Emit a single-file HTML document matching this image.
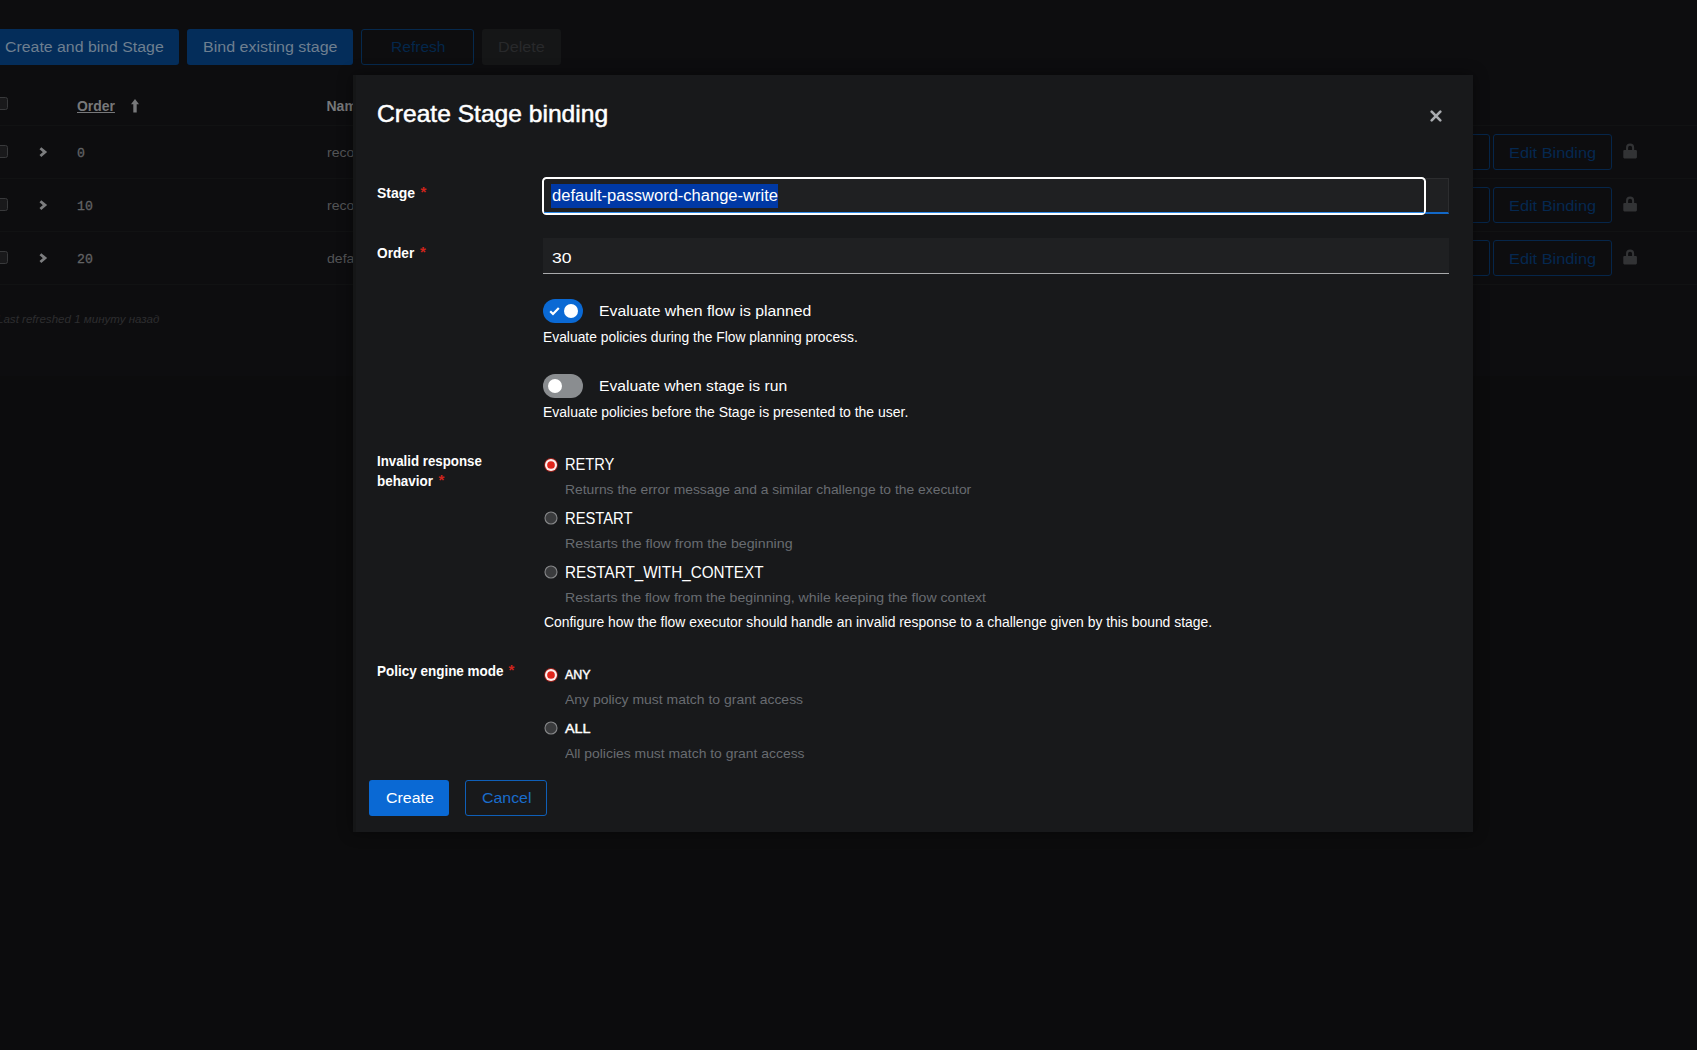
<!DOCTYPE html>
<html>
<head>
<meta charset="utf-8">
<title>Create Stage binding</title>
<style>
html,body{margin:0;padding:0;}
body{width:1697px;height:1050px;overflow:hidden;background:#0c0c0d;font-family:"Liberation Sans",sans-serif;position:relative;color:#fff;}
.a{position:absolute;box-sizing:border-box;}
.t{position:absolute;white-space:nowrap;line-height:1;transform-origin:0 0;}
.rowline{position:absolute;left:0;width:1697px;height:1px;background:#111213;}
.chk{position:absolute;left:-5px;width:13px;height:13px;border:1px solid #38393b;border-radius:2.5px;background:#19191b;box-sizing:border-box;}
.edit{position:absolute;left:1493px;width:119px;height:36px;border:1px solid #06264a;border-radius:3px;box-sizing:border-box;}
.edit2{position:absolute;left:1440px;width:50px;height:36px;border:1px solid #06264a;border-radius:3px;box-sizing:border-box;}
.req{position:absolute;color:#cf241c;font-size:15px;line-height:1;font-weight:bold;margin-top:-0.4px;}
</style>
</head>
<body>
<!-- page card (slightly lighter than page bg) -->
<div class="a" style="left:0;top:0;width:1697px;height:376px;background:#0d0d0f;"></div>
<!-- toolbar buttons -->
<div class="a" style="left:-20px;top:29px;width:199px;height:36px;border-radius:3px;background:#042d5a;"></div>
<div class="a" style="left:187px;top:29px;width:165.5px;height:36px;border-radius:3px;background:#042d5a;"></div>
<div class="a" style="left:361px;top:29px;width:113px;height:36px;border-radius:3px;border:1px solid #06294d;"></div>
<div class="a" style="left:482px;top:29px;width:79px;height:36px;border-radius:3px;background:#151617;"></div>

<!-- table -->
<div class="chk" style="top:97px;"></div>
<svg class="a" style="left:130.5px;top:99px;" width="8" height="13.5" viewBox="0 0 8 13.5"><path d="M4 0 L8 5.2 H5.7 V13.5 H2.3 V5.2 H0 Z" fill="#77787a"/></svg>
<div class="rowline" style="top:125px;"></div>
<div class="rowline" style="top:178px;"></div>
<div class="rowline" style="top:231px;"></div>
<div class="rowline" style="top:284px;"></div>
<div class="chk" style="top:145px;"></div>
<div class="chk" style="top:198px;"></div>
<div class="chk" style="top:251px;"></div>
<svg class="a" style="left:38px;top:146px;" width="10" height="12" viewBox="0 0 10 12"><path d="M2.4 2.2 L7 6.1 L2.4 10" fill="none" stroke="#7c7d7f" stroke-width="2.8"/></svg>
<svg class="a" style="left:38px;top:199px;" width="10" height="12" viewBox="0 0 10 12"><path d="M2.4 2.2 L7 6.1 L2.4 10" fill="none" stroke="#7c7d7f" stroke-width="2.8"/></svg>
<svg class="a" style="left:38px;top:252px;" width="10" height="12" viewBox="0 0 10 12"><path d="M2.4 2.2 L7 6.1 L2.4 10" fill="none" stroke="#7c7d7f" stroke-width="2.8"/></svg>

<div class="edit2" style="top:134px;"></div><div class="edit" style="top:134px;"></div>
<div class="edit2" style="top:187px;"></div><div class="edit" style="top:187px;"></div>
<div class="edit2" style="top:240px;"></div><div class="edit" style="top:240px;"></div>
<svg class="a" style="left:1623px;top:143px;" width="14.2" height="15.8" viewBox="0 0 15 16"><path d="M1.5 7 H13.5 A1.2 1.2 0 0 1 14.7 8.2 V14.8 A1.2 1.2 0 0 1 13.5 16 H1.5 A1.2 1.2 0 0 1 .3 14.8 V8.2 A1.2 1.2 0 0 1 1.5 7 Z M3.2 7 V4.6 A4.3 4.3 0 0 1 11.8 4.6 V7 H9.6 V4.6 A2.1 2.1 0 0 0 5.4 4.6 V7 Z" fill="#323335"/></svg>
<svg class="a" style="left:1623px;top:196px;" width="14.2" height="15.8" viewBox="0 0 15 16"><path d="M1.5 7 H13.5 A1.2 1.2 0 0 1 14.7 8.2 V14.8 A1.2 1.2 0 0 1 13.5 16 H1.5 A1.2 1.2 0 0 1 .3 14.8 V8.2 A1.2 1.2 0 0 1 1.5 7 Z M3.2 7 V4.6 A4.3 4.3 0 0 1 11.8 4.6 V7 H9.6 V4.6 A2.1 2.1 0 0 0 5.4 4.6 V7 Z" fill="#323335"/></svg>
<svg class="a" style="left:1623px;top:249px;" width="14.2" height="15.8" viewBox="0 0 15 16"><path d="M1.5 7 H13.5 A1.2 1.2 0 0 1 14.7 8.2 V14.8 A1.2 1.2 0 0 1 13.5 16 H1.5 A1.2 1.2 0 0 1 .3 14.8 V8.2 A1.2 1.2 0 0 1 1.5 7 Z M3.2 7 V4.6 A4.3 4.3 0 0 1 11.8 4.6 V7 H9.6 V4.6 A2.1 2.1 0 0 0 5.4 4.6 V7 Z" fill="#323335"/></svg>
<div class="t" style='left:4.60px;top:39.08px;font-size:15.5px;color:#6e7f90;transform:scaleX(1.0233);'>Create and bind Stage</div>
<div class="t" style='left:203.27px;top:39.08px;font-size:15.5px;color:#6e7f90;transform:scaleX(1.0336);'>Bind existing stage</div>
<div class="t" style='left:390.50px;top:39.08px;font-size:15.5px;color:#04274b;transform:scaleX(1.0047);'>Refresh</div>
<div class="t" style='left:498.46px;top:39.08px;font-size:15.5px;color:#28292b;transform:scaleX(1.0444);'>Delete</div>
<div class="t" style='left:76.50px;top:98.75px;font-size:14px;color:#77787a;font-weight:bold;transform:scaleX(0.9955);text-decoration:underline;text-underline-offset:1px;'>Order</div>
<div class="t" style='left:326.50px;top:98.75px;font-size:14px;color:#77787a;font-weight:bold;transform:scaleX(1.0000);'>Nam</div>
<div class="t" style='left:76.90px;top:147.28px;font-size:13px;color:#626365;font-family:"Liberation Mono", monospace;transform:scaleX(1.0143);-webkit-text-stroke:0.3px #626365;'>0</div>
<div class="t" style='left:76.90px;top:200.28px;font-size:13px;color:#626365;font-family:"Liberation Mono", monospace;transform:scaleX(1.0134);-webkit-text-stroke:0.3px #626365;'>10</div>
<div class="t" style='left:76.90px;top:253.28px;font-size:13px;color:#626365;font-family:"Liberation Mono", monospace;transform:scaleX(1.0134);-webkit-text-stroke:0.3px #626365;'>20</div>
<div class="t" style='left:327.20px;top:145.96px;font-size:13.4px;color:#535456;transform:scaleX(1.0500);'>reco</div>
<div class="t" style='left:327.20px;top:198.96px;font-size:13.4px;color:#535456;transform:scaleX(1.0500);'>reco</div>
<div class="t" style='left:327.20px;top:251.96px;font-size:13.4px;color:#535456;transform:scaleX(1.0500);'>defa</div>
<div class="t" style='left:1508.95px;top:144.98px;font-size:15.5px;color:#052850;transform:scaleX(1.0530);'>Edit Binding</div>
<div class="t" style='left:1508.95px;top:197.98px;font-size:15.5px;color:#052850;transform:scaleX(1.0530);'>Edit Binding</div>
<div class="t" style='left:1508.95px;top:250.98px;font-size:15.5px;color:#052850;transform:scaleX(1.0530);'>Edit Binding</div>
<div class="t" style='left:-3.50px;top:313.28px;font-size:11.6px;color:#2d2e30;font-style:italic;transform:scaleX(0.9977);'>Last refreshed 1 минуту назад</div>

<!-- modal -->
<div class="a" style="left:353px;top:75px;width:1120px;height:757px;background:#18191b;box-shadow:0 0 14px rgba(0,0,0,.45);"></div>
<div class="a" style="left:353px;top:75px;width:2.5px;height:757px;background:#151617;"></div>
<svg class="a" style="left:1429.5px;top:110px;" width="12" height="12" viewBox="0 0 12 12"><path d="M1.7 1.7 L10.3 10.3 M10.3 1.7 L1.7 10.3" stroke="#a9acb0" stroke-width="2.6" stroke-linecap="round" fill="none"/></svg>

<!-- stage input -->
<div class="a" style="left:1425px;top:178px;width:23.6px;height:36px;background:#1f2022;border:1px solid #2c2d2f;border-left:none;border-bottom:2px solid #1268c8;"></div>
<div class="a" style="left:542px;top:177px;width:884px;height:38px;border:2px solid #fff;border-radius:4.5px;background:#1f2022;"></div>
<div class="a" style="left:544px;top:212px;width:880px;height:1px;background:#2b8ae8;"></div>
<div class="a" style="left:551px;top:184px;width:227px;height:24px;background:#0039a6;"></div>
<div class="req" style="left:420.5px;top:184.8px;">*</div>

<!-- order input -->
<div class="a" style="left:543px;top:238px;width:905.6px;height:36px;background:#1f2022;border-bottom:1.5px solid #a9aaac;"></div>
<div class="req" style="left:420px;top:244.8px;">*</div>

<!-- switch 1 -->
<div class="a" style="left:543px;top:299.2px;width:40px;height:24px;border-radius:12px;background:#0a69d4;"></div>
<div class="a" style="left:564px;top:304.2px;width:14px;height:14px;border-radius:50%;background:#fff;"></div>
<svg class="a" style="left:549px;top:306.2px;" width="11" height="10" viewBox="0 0 11 10"><path d="M1.2 5.2 L4 8 L9.8 2" fill="none" stroke="#fff" stroke-width="2.2"/></svg>
<!-- switch 2 -->
<div class="a" style="left:543px;top:374.2px;width:40px;height:24px;border-radius:12px;background:#8a8d90;"></div>
<div class="a" style="left:548px;top:379.2px;width:14px;height:14px;border-radius:50%;background:#fff;"></div>

<!-- radios -->
<svg class="a" style="left:543.65px;top:458px;" width="14" height="14" viewBox="0 0 14 14"><circle cx="7" cy="7" r="6.9" fill="#9a1f19"/><circle cx="7" cy="7" r="6.0" fill="#fdeeee"/><circle cx="7" cy="7" r="3.85" fill="#e0241b"/></svg>
<svg class="a" style="left:543.65px;top:511px;" width="14" height="14" viewBox="0 0 14 14"><circle cx="7" cy="7" r="6" fill="#3a3b3d" stroke="#858688" stroke-width="1.1"/></svg>
<svg class="a" style="left:543.65px;top:565px;" width="14" height="14" viewBox="0 0 14 14"><circle cx="7" cy="7" r="6" fill="#3a3b3d" stroke="#858688" stroke-width="1.1"/></svg>
<svg class="a" style="left:543.65px;top:668px;" width="14" height="14" viewBox="0 0 14 14"><circle cx="7" cy="7" r="6.9" fill="#9a1f19"/><circle cx="7" cy="7" r="6.0" fill="#fdeeee"/><circle cx="7" cy="7" r="3.85" fill="#e0241b"/></svg>
<svg class="a" style="left:543.65px;top:721px;" width="14" height="14" viewBox="0 0 14 14"><circle cx="7" cy="7" r="6" fill="#3a3b3d" stroke="#858688" stroke-width="1.1"/></svg>
<div class="req" style="left:438.5px;top:472.3px;">*</div>
<div class="req" style="left:508.5px;top:662.8px;">*</div>

<!-- footer buttons -->
<div class="a" style="left:369px;top:780px;width:80px;height:36px;border-radius:3px;background:#0a69d4;"></div>
<div class="a" style="left:465px;top:780px;width:82px;height:36px;border-radius:3px;border:1px solid #0f5fb8;"></div>
<div class="t" style='left:377.08px;top:102.08px;font-size:24px;color:#fff;transform:scaleX(1.0247);-webkit-text-stroke:0.5px #fff;'>Create Stage binding</div>
<div class="t" style='left:377.25px;top:186px;font-size:14px;color:#fff;font-weight:bold;transform:scaleX(0.9977);'>Stage</div>
<div class="t" style='left:377.25px;top:246px;font-size:14px;color:#fff;font-weight:bold;transform:scaleX(0.9761);'>Order</div>
<div class="t" style='left:551.75px;top:187.9px;font-size:16px;color:#fff;transform:scaleX(1.0326);'>default-password-change-write</div>
<div class="t" style='left:552.10px;top:249.55px;font-size:15px;color:#fff;transform:scaleX(1.1718);'>30</div>
<div class="t" style='left:598.97px;top:303.36px;font-size:15.4px;color:#fff;transform:scaleX(1.0256);'>Evaluate when flow is planned</div>
<div class="t" style='left:543.30px;top:330.62px;font-size:13.8px;color:#fff;transform:scaleX(1.0035);'>Evaluate policies during the Flow planning process.</div>
<div class="t" style='left:598.98px;top:378.46px;font-size:15.4px;color:#fff;transform:scaleX(1.0178);'>Evaluate when stage is run</div>
<div class="t" style='left:543.29px;top:405.62px;font-size:13.8px;color:#fff;transform:scaleX(1.0134);'>Evaluate policies before the Stage is presented to the user.</div>
<div class="t" style='left:377.25px;top:454.25px;font-size:14px;color:#fff;font-weight:bold;transform:scaleX(0.9485);'>Invalid response</div>
<div class="t" style='left:377.25px;top:473.5px;font-size:14px;color:#fff;font-weight:bold;transform:scaleX(0.9592);'>behavior</div>
<div class="t" style='left:565.06px;top:456.8px;font-size:15.6px;color:#fff;transform:scaleX(0.9393);'>RETRY</div>
<div class="t" style='left:565.27px;top:483px;font-size:13.5px;color:#686c71;transform:scaleX(1.0272);'>Returns the error message and a similar challenge to the executor</div>
<div class="t" style='left:565.05px;top:510.8px;font-size:15.6px;color:#fff;transform:scaleX(0.9462);'>RESTART</div>
<div class="t" style='left:565.25px;top:537px;font-size:13.5px;color:#686c71;transform:scaleX(1.0529);'>Restarts the flow from the beginning</div>
<div class="t" style='left:565.02px;top:564.8px;font-size:15.6px;color:#fff;transform:scaleX(0.9778);'>RESTART_WITH_CONTEXT</div>
<div class="t" style='left:565.26px;top:591px;font-size:13.5px;color:#686c71;transform:scaleX(1.0447);'>Restarts the flow from the beginning, while keeping the flow context</div>
<div class="t" style='left:543.70px;top:615.82px;font-size:13.8px;color:#fff;transform:scaleX(1.0069);'>Configure how the flow executor should handle an invalid response to a challenge given by this bound stage.</div>
<div class="t" style='left:377.25px;top:664px;font-size:14px;color:#fff;font-weight:bold;transform:scaleX(0.9625);'>Policy engine mode</div>
<div class="t" style='left:565.20px;top:668.09px;font-size:13.6px;color:#fff;transform:scaleX(0.9163);-webkit-text-stroke:0.45px #fff;'>ANY</div>
<div class="t" style='left:564.90px;top:693px;font-size:13.5px;color:#686c71;transform:scaleX(1.0336);'>Any policy must match to grant access</div>
<div class="t" style='left:564.70px;top:722.09px;font-size:13.6px;color:#fff;transform:scaleX(1.0578);-webkit-text-stroke:0.45px #fff;'>ALL</div>
<div class="t" style='left:565.20px;top:747px;font-size:13.5px;color:#686c71;transform:scaleX(1.0299);'>All policies must match to grant access</div>
<div class="t" style='left:385.80px;top:790.46px;font-size:15.4px;color:#fff;transform:scaleX(1.0343);'>Create</div>
<div class="t" style='left:482.00px;top:790.46px;font-size:15.4px;color:#1a6ccb;transform:scaleX(1.0318);'>Cancel</div>
</body>
</html>
